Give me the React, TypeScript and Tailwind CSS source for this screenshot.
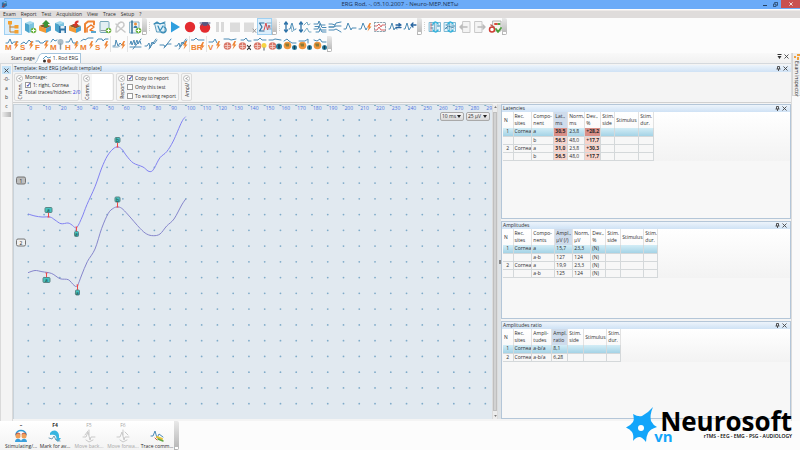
import type { ReactNode } from "react";

const BLUE = "#4a8ab5";
const ORANGE = "#ee8434";
const GREEN = "#6cb33f";
const GRAY = "#c9c9c9";

const Icon = ({ children }: { children: ReactNode }) => (
  <svg viewBox="0 0 14 14" className="size-3.5 shrink-0" fill="none" strokeLinecap="round" strokeLinejoin="round" aria-hidden="true">
    {children}
  </svg>
);

const Plus = () => (
  <>
    <circle cx="10.5" cy="10.5" r="2.8" fill={GREEN} />
    <path d="M10.5 9v3M9 10.5h3" stroke="#fff" strokeWidth="1" />
  </>
);

const Box = ({ top = "#a5daee", left = "#4ba3cb", right = "#7cc4e0" }) => (
  <>
    <path d="M2 3 7 1l4 1.5L6 4.5z" fill={top} />
    <path d="M2 3 6 4.500v8.500l-4-2.500z" fill={left} />
    <path d="M6 4.500l5-2v8.500L6 13z" fill={right} />
  </>
);

const Crate = ({ arrow }: { arrow: ReactNode }) => (
  <>
    <path d="M1 6l5-2 7 2-5 2.500z" fill="#8a5a2c" />
    <path d="M1 6l7 2.500V13l-7-2.500z" fill="#f39a35" />
    <path d="M8 8.500 13 6v4.500L8 13z" fill="#4aa3cf" />
    {arrow}
  </>
);

const Bolt = ({ x = 0, y = 0 }) => <path transform={`translate(${x} ${y})`} d="M11.500 4 9 8.500h1.800L9.500 12.500l4-5h-1.800L13 4z" fill={ORANGE} />;

const Wave = ({ color = BLUE, d = "M1 6h2l2-4 2 5 1.500-2H13" }) => <path d={d} stroke={color} strokeWidth="1" />;

const Letter = ({ children, x = 0 }: { children: string; x?: number }) => (
  <text x={x} y="13" fontSize="8" fontWeight="700" fill={ORANGE} fontFamily="Liberation Sans, sans-serif">
    {children}
  </text>
);

const Brain = () => (
  <>
    <circle cx="4.500" cy="9" r="3.800" fill="#d9786a" />
    <path d="M2 8.500h5M2.500 10.500h4M4.500 6v6" stroke="#f4cfc8" strokeWidth=".8" />
  </>
);

const Head = () => (
  <>
    <circle cx="4.500" cy="8.500" r="3.800" fill="#f0963c" />
    <path d="M2 6.500h4v3H3z" fill="#8a7a38" />
    <circle cx="11.500" cy="10.500" r="2.500" fill="#2d7f9f" />
    <path d="M11.500 9.500v2" stroke="#123b52" strokeWidth="1.500" />
  </>
);

type Tool = { name: string; active?: boolean; icon: ReactNode };

const fileTools: Tool[] = [
  {
    name: "Exam tree",
    active: true,
    icon: (
      <>
        <path d="M4 4v8h5M4 7h5" stroke="#c67a1e" strokeWidth="1" />
        <path d="M2 1h4v3.500H2zM8.500 5h4v3.500h-4zM8.500 10h4v3.500h-4z" fill="#f5a02c" />
      </>
    ),
  },
  { name: "New exam", icon: <><Box /><Plus /></> },
  { name: "Open exam", icon: <Crate arrow={<path d="M6 7V4H4l4-4 4 4h-2v3z" fill="#3d9438" />} /> },
  { name: "Save exam", icon: <><Box /><path d="M6 6h7v7H6z" fill="#2f73a6" /><path d="M7.500 6h4v2.500h-4zM8 10.500h3.500V13H8z" fill="#e4f1f8" /></> },
  { name: "Close exam", icon: <Crate arrow={<path d="M7.500 7.500 4.500 4h2c0-2 1-3.500 4-3.500v2c-1 0-1.500.5-1.500 1.500h1.500z" fill="#d8352a" />} /> },
  {
    name: "Analysis",
    icon: (
      <>
        <path d="M2 12V4l3-2.500h6v3" stroke={ORANGE} strokeWidth="2" />
        <path d="M4 12V8l4-3 3 2-4 3 5 2" stroke="#ee7623" strokeWidth="1.500" />
        <path d="M8 11h5v2H8z" fill="#5aa7cf" />
      </>
    ),
  },
  { name: "Device", icon: <><rect x="2" y="1.500" width="9" height="11" rx="1" fill="#e3eff3" stroke="#78a7b8" /><path d="M3 10.500h5" stroke="#8a9aa0" /><Plus /></> },
  { name: "Patient", icon: <path d="M3 12c0-5 2-9 5-10 3 0 4 3 2 5l-6 5M3 4l4 4 5 4" stroke={GRAY} strokeWidth="1.500" /> },
  {
    name: "Patient report",
    icon: (
      <>
        <path d="M2 2h9v11H2z" fill="#eef6fa" stroke="#6f9fb8" strokeWidth=".8" />
        <path d="M4 1v12" stroke="#2e6c95" strokeWidth="1.500" />
        <circle cx="7.500" cy="4" r="1.500" fill="#ef8f3b" />
        <path d="M5.500 8c0-3 4-3 4 0" fill="#3e7faa" />
        <Plus />
      </>
    ),
  },
];

const acquisitionTools: Tool[] = [
  {
    name: "Monitoring",
    icon: (
      <>
        <path d="M2 3.500h10v8.500H4z" fill="#dff1fa" stroke="#5e9cbd" />
        <path d="M1 4l3-2 3 2 5-2M5 6l2 5 3-5M11 7a3 3 0 1 1-3 5" stroke="#3489b6" strokeWidth="1.200" />
      </>
    ),
  },
  { name: "Start", icon: <path d="M3 1.500 12 7l-9 5.500z" fill="#2f9ede" /> },
  { name: "Record", icon: <circle cx="7" cy="7" r="5.200" fill="#e32b2f" /> },
  { name: "Record trace", icon: <><circle cx="7" cy="7.500" r="5.200" fill="#e32b2f" /><path d="M2 3h10M3 5h1l1-3 1 4 1-4 1 4 1-4 1 3h1" stroke="#4c5a86" strokeWidth="1" /></> },
  { name: "Pause", icon: <path d="M3 2h3v10H3zM8 2h3v10H8z" fill="#dadada" /> },
  { name: "Stop", icon: <path d="M2 2.500h10v9.500H2z" fill="#dcdcdc" /> },
  { name: "Stop and clear", icon: <><path d="M1 2.500h10v9.500H1z" fill="#dcdcdc" /><path d="m10 9 3 3.500m0-3.500-3 3.500" stroke="#999" /></> },
  {
    name: "Averaging",
    active: true,
    icon: (
      <>
        <path d="M6 3H1.500L4 7l-2.500 4H6" stroke="#2c6f9e" strokeWidth="1.200" />
        <path d="m6 10 2-7 1.500 7L11 5l1 3" stroke="#d9484a" strokeWidth="1" />
        <path d="M9 3h4M10 6h3M10 9h3" stroke="#6f9fb8" strokeWidth=".8" />
      </>
    ),
  },
];

const updown = "M3 2v10M1.500 4 3 2l1.500 2M1.500 10 3 12l1.500-2";

const traceTools: Tool[] = [
  { name: "Scale traces", icon: <><path d={updown} stroke="#2f73a8" strokeWidth="1.300" /><Wave d="M6 9h1l2-6 2 7 2-1" /><Wave d="M8 5l1 7 3-3" color="#8fb9cf" /></> },
  { name: "Shift traces", icon: <><path d={updown} stroke="#2f73a8" strokeWidth="1.300" /><Wave d="M6 5l3-3 1 3 2-1M6 12l3-4 2 4h2" color="#78abc4" /></> },
  { name: "Superimpose", icon: <Wave d="M1 4h4l1-3 2 4h4M2 6.500h4l1-3 2 4h4M1 9h4l1-3 2 4h5M3 12h3l1-3 2 3h4" /> },
  { name: "Spread", icon: <Wave d="M1 7h5l2-4 5-1M1 7h5l2-1h5M1 10h5l2-1 5 3M1 4h3l3 1" /> },
  { name: "Single trace", icon: <Wave d="M1 9h2l2-6 3 7 1-2h4" /> },
  { name: "Stimulated trace", icon: <><Wave d="M1 9h2l2-6 3 7 1-2" /><Bolt y={-1} /></> },
  { name: "Select traces", icon: <><rect x="1.500" y="2.500" width="11" height="9" stroke="#8aa1ad" strokeDasharray="1.500 1.500" /><Wave color="#d9686a" d="M2 6h2l2-2 2 3 1-2h3M2 10h2l2-3 2 3h4" /></> },
  { name: "Add trace", icon: <><Wave d="M1 9h1l2-6 2 7 1-2 2 1" /><path d="M8 5h5M8 7.500h5M11 3.500 13 5l-2 1" stroke="#2664a0" strokeWidth="1.300" /></> },
  { name: "Move trace", icon: <><Wave d="M1 9h1l2-6 2 7 2-3" /><path d="M13 5H8l2-2M8 5l2 2" stroke="#2664a0" strokeWidth="1.300" /></> },
];

const Frames = () => (
  <>
    <path d="M1.500 2.500h5v9h-5zM8.500 2.500h4v9h-4z" fill="#e5f4fb" stroke="#6fb0cf" strokeWidth=".9" />
    <path d="M3 5h2M3 8h2M9.500 6h2" stroke="#2c7ba5" />
    <path d="M5 4c2-3 4-2 5 0M10 10c-2 3-4 2-5 0" stroke="#33b3dc" strokeWidth="1.500" />
  </>
);

const reportTools: Tool[] = [
  { name: "Synchronize all", icon: <><Frames /><path d="M3 3v8" stroke="#cf6a6a" strokeWidth=".8" /></> },
  { name: "Synchronize page", icon: <><Frames /><path d="M2 9l3-3 6 2" stroke="#397ca3" strokeWidth=".8" /></> },
  { name: "Previous page", icon: <><path d="M5 1.500h7v11H5z" fill="#f4f4f4" stroke={GRAY} /><path d="M9 7H2l2-2M2 7l2 2" stroke="#bbb" strokeWidth="1.500" /></> },
  { name: "Next page", icon: <><path d="M2 1.500h7v11H2z" fill="#f4f4f4" stroke={GRAY} /><path d="M5 7h7l-2-2M12 7l-2 2" stroke="#bbb" strokeWidth="1.500" /></> },
  {
    name: "Finish exam",
    icon: (
      <>
        <path d="M5 1h8v10H5z" fill="#f6f6f0" stroke="#a3a3a3" strokeWidth=".8" />
        <path d="M7 4h2" stroke="#d94b3d" strokeWidth="2" />
        <path d="M10.500 4h1" stroke="#4b9e3d" strokeWidth="2" />
        <circle cx="4" cy="9.500" r="2.500" fill="#fff" stroke="#cf3d33" strokeWidth="1.500" />
        <path d="M8 9l2 3 3-4" stroke="#4b9e3d" strokeWidth="1.800" />
        <path d="M3 5l3 2" stroke="#c0584e" strokeWidth="1.500" />
      </>
    ),
  },
];

const lettered = (name: string, letter: string, d?: string): Tool => ({
  name,
  icon: <><Wave d={d} /><Letter>{letter}</Letter><Bolt /></>,
});

const testTools: Tool[][] = [
  [
    lettered("Motor conduction", "M"),
    lettered("Sensory conduction", "S", "M1 7l3-2 2 2 3-4 2 2h2"),
    lettered("F-wave", "F", "M1 4h3l1 2h3l2-2h3"),
    { name: "Magnetic stimulation", icon: <><Wave d="M1 5l2-3 2 2 2-1" /><Letter>M</Letter><circle cx="10.500" cy="5" r="3" fill="#a9bcc7" /><path d="M10.500 7v5" stroke="#8799a5" strokeWidth="1.500" /></> },
    lettered("H-reflex", "H", "M1 5h3l2-4 2 5h5"),
    lettered("Repetitive motor", "M", "M1 4l3-2 1 1 3-2h5"),
    lettered("Repetitive sensory", "S", "M1 5l2-3h4l1 2 2-2h3"),
  ],
  [{ name: "Blink reflex", icon: <><Wave d="M1 9h2l1-6 2 6 2-3 2 2" /><Wave d="M1 10h5l2-1" color="#88adc4" /><Bolt /></> }],
  [
    { name: "Interference EMG", icon: <Wave d="M1 7l1-3 1 4 2-5 1 5 2-5 1 4 2-3 1 3M1 10h11M4 12l8-10" /> },
    { name: "Needle EMG", icon: <Wave d="M1 9h2l2-3 1 5 2-6 2 2 3-4M5 12l7-10" /> },
    { name: "Single fiber", icon: <Wave d="M1 8h4l1 2 2-3h4M5 11l7-9" /> },
    { name: "Macro EMG", icon: <><Wave d="M1 9h2l2-3 1 4 2-5 2 2 3-4M5 12l7-10" /><Bolt /></> },
  ],
  [{ name: "Brainstem", icon: <><Wave d="M0 3h3l2-2 2 2h6" /><Letter>BR</Letter><Bolt y={1} /></> }],
  [
    { name: "Vestibular EP", icon: <><Wave d="M1 5h4l2-3 2 4" /><Letter>V</Letter><Bolt x={-1} /></> },
    { name: "Somatosensory EP", icon: <><Brain /><Wave d="M1 2h5l2 1 5-1" /><Bolt /></> },
    { name: "Event related EP", icon: <><Brain /><Wave d="M3 3h3l2-2 2 3h3" /><path d="m9.500 8.500 3 4m0-4-3 4" stroke="#35383a" strokeWidth="1.200" /></> },
    { name: "Flash EP", icon: <><Brain /><Wave d="M1 3h4l2-2 2 2h4" /><circle cx="11" cy="8.500" r="2.500" fill="#f7d443" /><path d="M11 11v2" stroke="#8a8f96" strokeWidth="1.500" /></> },
    { name: "Auditory EP", icon: <><Brain /><Wave d="M1 3h4l2-1 6 1" /><circle cx="11" cy="9.500" r="3" fill="#2b7f9f" /><path d="M11 8v3" stroke="#16394d" strokeWidth="1.500" /></> },
    { name: "Pattern VEP", icon: <><Head /><Wave d="M1 4l3-2 2 2 3 2h4" /></> },
    { name: "ERG", icon: <><Head /><Wave d="M1 4h6l3-2v4" /></> },
    { name: "EOG", icon: <><Head /><Wave d="M1 3l3 1 3-2 2 3h4" /></> },
  ],
];

const Grip = () => (
  <span className="flex w-[5px] justify-center py-1">
    <span className="border-l border-dotted border-stone-300" />
  </span>
);

const Overflow = () => (
  <button aria-label="Toolbar options" className="flex w-[5px] items-end justify-center rounded-r-xs bg-linear-to-b from-[#e9e9e9] to-[#b4b4b4]">
    <span className="mb-px h-[2px] w-[3px] bg-white" />
  </button>
);

const ToolButton = ({ tool, wide }: { tool: Tool; wide?: boolean }) => (
  <button
    aria-label={tool.name}
    className={`flex items-center justify-center ${wide ? "w-[18px]" : "w-[15px]"} ${tool.active ? "border border-[#9fd0f2] bg-[#dceefb]" : ""}`}
  >
    <Icon>{tool.icon}</Icon>
  </button>
);

const ToolGroup = ({ tools, first }: { tools: Tool[]; first?: boolean }) => (
  <div className="flex h-[17px]">
    {first ? <span className="w-1" /> : <Grip />}
    {tools.map((tool, i) => (
      <ToolButton key={tool.name} tool={tool} wide={first && i === 0} />
    ))}
    <Overflow />
  </div>
);

const CloseIcon = () => (
  <svg viewBox="0 0 5 5" className="size-[5px]" stroke="#444" strokeWidth=".9" aria-hidden="true">
    <path d="M.5.5l4 4m0-4-4 4" />
  </svg>
);

const PinIcon = () => (
  <svg viewBox="0 0 5 5" className="size-[5px]" fill="none" stroke="#444" aria-hidden="true">
    <path d="M1.500 3V.5h2V3M.5 3h4M2.500 3v2" strokeWidth=".9" />
  </svg>
);

const PanelTitle = ({ children }: { children: ReactNode }) => (
  <div className="flex h-[7px] shrink-0 items-center justify-between bg-linear-to-b from-[#edf4fb] to-[#cfe2f5] pr-[3px] pl-px leading-[7px]">
    <h2>{children}</h2>
    <div className="flex gap-[2px]">
      <button aria-label="Pin"><PinIcon /></button>
      <button aria-label="Close"><CloseIcon /></button>
    </div>
  </div>
);

const Foldable = ({ label, children }: { label: string; children?: ReactNode }) => (
  <section className="flex gap-[2px] rounded-xs border border-[#dcdcdc] bg-[#f6f6f6] px-px">
    <div className="flex w-[7px] flex-col items-center gap-px">
      <button aria-label={`Collapse ${label}`} className="mt-px flex size-[7px] shrink-0 items-center justify-center rounded-full border border-[#bbb] bg-white">
        <svg viewBox="0 0 4 4" className="size-[3px]" fill="none" stroke="#333"><path d="M3 .5 1.500 2 3 3.500" /></svg>
      </button>
      <span className="rotate-180 leading-[6px] [writing-mode:vertical-rl]">{label}</span>
    </div>
    {children}
  </section>
);

const Check = ({ label, checked }: { label: string; checked?: boolean }) => (
  <label className="flex h-2 items-center gap-[2px]">
    <input
      type="checkbox"
      defaultChecked={checked}
      className="flex size-[6px] shrink-0 appearance-none items-center justify-center border border-[#9a9a9a] bg-white text-[#3542a8] checked:after:text-[6px] checked:after:leading-[4px] checked:after:font-bold checked:after:content-['✓']"
    />
    {label}
  </label>
);

type Point = [number, number];

const PITCH = 15.76;

const traceOne: Point[] = [
  [28, 214], [35, 216], [42, 217], [50, 217], [55, 220], [61, 223.7], [68, 223], [72, 225], [76.5, 227.7], [81.7, 218],
  [87, 204.500], [95, 186.7], [101.7, 168], [107.3, 156], [113, 149], [117.3, 147], [121.7, 149], [126.7, 156], [133.3, 163],
  [143, 167], [148, 171], [151.7, 171.3], [154.500, 167.7], [160, 157.7], [166.7, 151.7], [173.3, 141], [181.7, 122], [185.7, 116.7],
];

const traceTwo: Point[] = [
  [28, 272.7], [35, 270.500], [42, 271.7], [51.7, 273.500], [60, 278.7], [68.3, 279.7], [74, 285.3], [77.3, 285.7], [81.7, 275],
  [87.3, 261.7], [95, 249], [101.7, 228.3], [108.3, 213.3], [113.3, 208.3], [117.3, 207], [121.7, 208.3], [128.3, 215],
  [140, 228.3], [146.7, 234], [153.3, 235.7], [160, 234], [166.7, 226], [174, 219], [181.7, 205], [185.7, 199],
];

// Catmull-Rom through the samples, written as cubic segments
const smooth = (pts: Point[]) =>
  pts.slice(1).reduce((d, p, i) => {
    const a = pts[Math.max(i - 1, 0)];
    const b = pts[i];
    const c = pts[Math.min(i + 2, pts.length - 1)];
    return `${d}C${b[0] + (p[0] - a[0]) / 6} ${b[1] + (p[1] - a[1]) / 6} ${p[0] - (c[0] - b[0]) / 6} ${p[1] - (c[1] - b[1]) / 6} ${p[0]} ${p[1]}`;
  }, `M${pts[0][0]} ${pts[0][1]}`);

const markers = [
  { label: "b", x: 117.5, y: 140, w: 5, tip: 147 },
  { label: "b", x: 117.5, y: 199.5, w: 5, tip: 207 },
  { label: "a", x: 48.5, y: 210, w: 7, tip: 217 },
  { label: "a", x: 76.5, y: 234, w: 4, tip: 227 },
  { label: "a", x: 46.5, y: 280, w: 7, tip: 273 },
  { label: "a", x: 77.5, y: 292.5, w: 4, tip: 285 },
];

const Plot = () => (
  <svg viewBox="14 105 479 314" className="block h-[314px] w-[479px]" fontFamily="Open Sans, sans-serif" role="img" aria-label="ERG traces">
    {Array.from({ length: 30 }, (_, col) => {
      const x = 28.3 + col * PITCH;
      return (
        <g key={col}>
          <path d={`M${x - 1} 105.5h2`} stroke="#7fb0c4" />
          <text x={x + 1} y="110" fontSize="5" fill="#4a74e0">{col * 10}</text>
          {Array.from({ length: 19 }, (_, row) => (
            <circle key={row} cx={x} cy={120 + row * PITCH} r=".9" fill="#7fabc9" />
          ))}
        </g>
      );
    })}
    <path d={smooth(traceOne)} fill="none" stroke="#8282f2" />
    <path d={smooth(traceTwo)} fill="none" stroke="#8686cc" />
    {markers.map((m) => (
      <g key={`${m.x}-${m.y}`}>
        <path d={`M${m.x} ${m.y}V${m.tip}M${m.x - 1} ${m.tip}h2`} stroke="#f04848" />
        <rect x={m.x - m.w / 2} y={m.y - 2.5} width={m.w} height="5" rx="1" fill="#45c4c0" stroke="#5c8787" />
        <text x={m.x} y={m.y + 2} fontSize="5" textAnchor="middle" fill="#14393a">{m.label}</text>
      </g>
    ))}
    {["1", "2"].map((n, i) => (
      <g key={n}>
        <rect x="16.500" y={177 + i * 62} width="9" height="7" rx="1.500" fill={i ? "#f0f0f0" : "#bdbdbd"} stroke="#747474" />
        <text x="21" y={182.5 + i * 62} fontSize="5" textAnchor="middle" fill="#222">{n}</text>
      </g>
    ))}
  </svg>
);

const ScaleSelect = ({ label, value }: { label: string; value: string }) => (
  <div className="relative h-[9px] w-6">
    <select
      aria-label={label}
      defaultValue={value}
      className="block h-full w-full appearance-none rounded-xs border border-[#a9a9a9] bg-linear-to-b from-[#f4f4f4] to-[#d8d8d8] pl-px leading-[7px]"
    >
      <option>{value}</option>
    </select>
    <svg viewBox="0 0 4 3" className="pointer-events-none absolute top-[3px] right-[3px] h-[3px] w-1"><path d="M0 0h4L2 3z" fill="#222" /></svg>
  </div>
);

type Grid = {
  title: string;
  // column header, width class
  cols: [string, string][];
  rows: string[][];
  sorted: number;
  flagged?: boolean;
};

const grids: Grid[] = [
  {
    title: "Latencies",
    cols: [
      ["N", "w-[10px]"], ["Rec. sites", "w-[18px]"], ["Compo- nent", "w-[22px]"], ["Lat., ms", "w-[14px]"], ["Norm, ms", "w-[17px]"],
      ["Dev., %", "w-[16px]"], ["Stim. side", "w-[14px]"], ["Stimulus", "w-[24px]"], ["Stim. dur.", "w-[15px]"],
    ],
    rows: [
      ["1", "Cornea", "a", "30,5", "23,8", "+28,2", "", "", ""],
      ["", "", "b", "56,5", "48,0", "+17,7", "", "", ""],
      ["2", "Cornea", "a", "31,0", "23,8", "+30,3", "", "", ""],
      ["", "", "b", "56,5", "48,0", "+17,7", "", "", ""],
    ],
    sorted: 3,
    flagged: true,
  },
  {
    title: "Amplitudes",
    cols: [
      ["N", "w-[10px]"], ["Rec. sites", "w-[17px]"], ["Compo- nents", "w-[23px]"], ["Ampl., µV (/)", "w-[18px]"], ["Norm, µV", "w-[18px]"],
      ["Dev., %", "w-[15px]"], ["Stim. side", "w-[15px]"], ["Stimulus", "w-[23px]"], ["Stim. dur.", "w-[14px]"],
    ],
    rows: [
      ["1", "Cornea", "a", "15,7", "23,3", "(N)", "", "", ""],
      ["", "", "a-b", "127", "124", "(N)", "", "", ""],
      ["2", "Cornea", "a", "19,9", "23,3", "(N)", "", "", ""],
      ["", "", "a-b", "125", "124", "(N)", "", "", ""],
    ],
    sorted: 3,
  },
  {
    title: "Amplitudes ratio",
    cols: [
      ["N", "w-[10px]"], ["Rec. sites", "w-[17px]"], ["Ampli- tudes", "w-[20px]"], ["Ampl. ratio", "w-[16px]"],
      ["Stim. side", "w-[16px]"], ["Stimulus", "w-[23px]"], ["Stim. dur.", "w-[14px]"],
    ],
    rows: [
      ["1", "Cornea", "a-b/a", "8,1", "", "", ""],
      ["2", "Cornea", "a-b/a", "6,28", "", "", ""],
    ],
    sorted: 3,
  },
];

const cellTone = (grid: Grid, row: number, col: number) => {
  if (!grid.flagged || (col !== 3 && col !== 5)) return "";
  return row === 0 ? "bg-[#d98f87] font-bold" : "bg-[#f8d3ca] font-bold";
};

const GridPanel = ({ grid, size }: { grid: Grid; size: string }) => (
  <section className={`flex flex-col border border-[#b4c6d8] bg-[#f7f7f7] ${size}`}>
    <PanelTitle>{grid.title}</PanelTitle>
    <div className="bg-linear-to-b from-white to-[#f3f3f3] pl-px">
      <table className="w-max table-fixed border-collapse">
        <thead>
          <tr className="h-4">
            {grid.cols.map(([head, width], c) => (
              <th key={c} className={`${width} overflow-hidden border-r border-[#e2e2e2] p-0 text-left font-normal ${c === grid.sorted ? "bg-[#cfdcec]" : ""} ${c === 0 ? "text-center" : ""}`}>
                <div className="pl-px leading-[7px]">
                  {head.includes(" ") ? (
                    <>
                      {head.slice(0, head.indexOf(" "))}
                      <br />
                      <span className="whitespace-nowrap">{head.slice(head.indexOf(" ") + 1)}</span>
                    </>
                  ) : (
                    head
                  )}
                </div>
              </th>
            ))}
          </tr>
        </thead>
        <tbody>
          {grid.rows.map((row, r) => (
            <tr key={r} className={r === 0 ? "h-2 bg-linear-to-b from-[#d3edf6] to-[#a4d3e6]" : "h-2 bg-[#f7f7f7]"}>
              {row.map((cell, c) => (
                <td key={c} className={`overflow-hidden border-r border-b border-[#d4d8da] p-0 leading-[7px] whitespace-nowrap ${cellTone(grid, r, c)}`}>
                  <div className={c === 0 ? "h-[7px] text-center" : "h-[7px] pl-px"}>{cell}</div>
                </td>
              ))}
            </tr>
          ))}
        </tbody>
      </table>
    </div>
  </section>
);

const commands = [
  {
    key: "–",
    label: "Stimulating/...",
    icon: (
      <>
        <path d="M2 6c0-6 10-6 10 0" stroke="#2e9bd6" strokeWidth="1.500" />
        <circle cx="4" cy="7" r="2.500" fill="#f0a05a" />
        <circle cx="10" cy="7" r="2.500" fill="#f0a05a" />
        <path d="M1 13c0-4 5-4 6-1 1-3 6-3 6 1z" fill="#3aa0dc" />
        <path d="M2 5l2-1 2 1M8 5l2-1 2 1" stroke="#c14b30" />
      </>
    ),
  },
  { key: "F4", label: "Mark for av...", icon: <><path d="M2 4c3-4 8-3 9 2v3h2l-3 4-3-3h1.500c0-4-2-5-6.500-4z" fill="#38b5e0" /><Wave d="M1 9l3 1 2-3 2 4 4 1" color="#6f9db5" /></> },
  { key: "F5", label: "Move back...", off: true, icon: <path d="M1 8h3l2-5 2 8 1-3h4M7 1v5M3 6l3-4M4 11l3 2 4-2" stroke={GRAY} /> },
  { key: "F6", label: "Move forwa...", off: true, icon: <path d="M1 8h3l2-5 2 8 1-3h4M7 1v5M9 3l3 3M4 11l3 2 4-2" stroke={GRAY} /> },
  { key: "", label: "Trace comm...", icon: <><Wave d="M1 7h2l2-5 2 7 2-4 4 3" /><path d="m7 8 5 2" stroke="#e7c33b" strokeWidth="2" /><path d="m8 10 5 2" stroke="#62a644" strokeWidth="1.500" /><path d="m5 9 2 2" stroke="#d65f3a" /></> },
];

export default function App() {
  return (
    <div className="relative flex min-h-screen flex-col overflow-hidden border-b border-[#a9bfd3] bg-[#fcfcfc] font-['Open_Sans','Noto_Sans',sans-serif] text-[5px] leading-[7px] text-[#2c2c2c]">
      <header className="grid h-[9px] shrink-0 grid-cols-[1fr_auto_1fr] bg-[#6babf8]">
        <svg viewBox="0 0 8 8" className="mt-px ml-px size-[7px]">
          <path d="M1 2l5-2 1 5-4 3-2-2z" fill="#2670a5" />
          <path d="M2 5l3-2M1 7l3-1" stroke="#b33a3a" />
          <path d="M3 2h3" stroke="#9adcf5" />
        </svg>
        <h1 className="text-[6px] leading-[9px] text-[#1d3350]">ERG Rod, -, 05.10.2007 - Neuro-MEP.NETω</h1>
        <div className="flex items-stretch justify-end">
          <button aria-label="Minimize" className="flex w-[11px] items-center justify-center"><span className="mt-px h-px w-1 bg-[#24405f]" /></button>
          <button aria-label="Restore" className="flex w-[11px] items-center justify-center">
            <svg viewBox="0 0 6 6" className="size-[5px]" fill="none" stroke="#24405f"><path d="M.5 2.500h3v3h-3zM2 2V.5h3.500V4H4" /></svg>
          </button>
          <button aria-label="Close window" className="mb-px flex w-[19px] items-center justify-center bg-[#c9504f]">
            <svg viewBox="0 0 5 5" className="size-1" stroke="#fff"><path d="M.5.5l4 4m0-4-4 4" /></svg>
          </button>
        </div>
      </header>

      <nav className="mt-px flex h-2 shrink-0 items-center gap-[5px] border-t border-[#eeeae8] bg-[#dfdcdb] pl-[3px]">
        {["Exam", "Report", "Test", "Acquisition", "View", "Trace", "Setup", "?"].map((item) => (
          <button key={item}>{item}</button>
        ))}
      </nav>

      <div className="flex h-[35px] shrink-0 flex-col gap-px">
        <div className="flex">
          <ToolGroup tools={fileTools} first />
          <ToolGroup tools={acquisitionTools} />
          <ToolGroup tools={traceTools} />
          <ToolGroup tools={reportTools} />
        </div>
        <div className="flex h-4">
          <span className="w-1" />
          {testTools.map((tools, i) => (
            <div key={i} className={`flex ${i ? "ml-px border-l border-[#e3e3e3]" : ""}`}>
              {tools.map((tool) => (
                <ToolButton key={tool.name} tool={tool} />
              ))}
            </div>
          ))}
          <Overflow />
        </div>
      </div>

      <div className="flex grow">
        <div className="flex min-w-0 grow flex-col border-r border-[#dcdcdc] bg-[#f4f4f4]">
          <div className="flex h-[11px] shrink-0 items-end border-b border-[#d5d9dd] bg-linear-to-b from-[#f9f9f9] to-[#f1f1f1] pr-[2px]">
            <button className="h-[9px] pl-[11px]">Start page</button>
            <button className="flex h-[10px] items-center">
              <svg viewBox="0 0 7 10" className="h-[10px] w-[7px]"><path d="M0 10 6 0h1v10z" fill="#fff" /><path d="M0 10C3 9 3 1 7 .5" fill="none" stroke="#a5c4dc" /></svg>
              <span className="flex h-full items-center gap-px border-t border-r border-[#a5c4dc] bg-white pr-[2px]">
                <svg viewBox="0 0 10 8" className="h-2 w-[10px]" fill="none">
                  <path d="M1 4l3-3 2 2 3-1" stroke="#5b9cc4" />
                  <circle cx="2.500" cy="6" r="1.500" fill="#35302c" />
                  <circle cx="7" cy="6" r="2" fill="#b5603c" />
                </svg>
                1. Rod ERG
              </span>
            </button>
            <div className="mb-1 ml-auto flex gap-[2px]">
              <button aria-label="Tab list"><svg viewBox="0 0 5 5" className="size-[5px]"><path d="M.5 0h4v1h-4zM.5 2h4l-2 3z" fill="#333" /></svg></button>
              <button aria-label="Close tab"><CloseIcon /></button>
            </div>
          </div>

          <div className="flex grow">
            <aside className="flex w-[13px] shrink-0 flex-col items-center gap-[2px] border-x border-[#dadada] pt-[2px]">
              <button className="flex h-2 w-[9px] items-center justify-center bg-[#c5e3f8]" aria-label="Close marker"><CloseIcon /></button>
              {["-0-", "a", "b", "c"].map((mark) => (
                <button key={mark} className="h-[7px]">{mark}</button>
              ))}
              <span className="h-[5px] w-[9px] bg-linear-to-r from-[#ececec] to-[#b4b4b4]" />
            </aside>

            <div className="flex min-w-0 grow flex-col pt-px">
              <section className="shrink-0 border-b border-[#d0d0d0] pb-px">
                <PanelTitle>Template: Rod ERG [default template]</PanelTitle>
                <div className="flex h-[29px] gap-[2px] pt-px pl-px">
                  <Foldable label="Chann.">
                    <div className="flex w-[52px] flex-col whitespace-nowrap">
                      <span>Montage:</span>
                      <Check label="1: right, Cornea" checked />
                      <span>Total traces/hidden: <b className="font-normal text-[#2a35d8]">2/0</b></span>
                    </div>
                  </Foldable>
                  <Foldable label="Comm.">
                    <textarea aria-label="Comment" className="w-5 resize-none bg-white" />
                  </Foldable>
                  <Foldable label="Report">
                    <div className="flex w-[50px] flex-col justify-between whitespace-nowrap">
                      <Check label="Copy to report" checked />
                      <Check label="Only this test" />
                      <Check label="To existing report" />
                    </div>
                  </Foldable>
                  <Foldable label="Ampl/" />
                </div>
              </section>

              <div className="flex grow pt-px pb-[2px]">
                <div className="relative min-w-0 flex-1 overflow-hidden border-t border-l border-[#c8d2da] bg-[#e1e9f0]">
                  <Plot />
                  <div className="absolute top-[7px] right-[2px] flex gap-[2px]">
                    <ScaleSelect label="Sweep" value="10 ms" />
                    <ScaleSelect label="Sensitivity" value="25 µV" />
                  </div>
                </div>
                <div className="flex w-[6px] shrink-0 flex-col items-center justify-between border-x border-[#dcdcdc] bg-[#ececec] py-[2px]">
                  <svg viewBox="0 0 4 3" className="h-[2px] w-[3px]"><path d="M0 3h4L2 0z" fill="#777" /></svg>
                  <span className="my-1 w-1 grow border border-[#bfbfbf] bg-[#d2d2d2]" />
                  <svg viewBox="0 0 4 3" className="h-[2px] w-[3px]"><path d="M0 0h4L2 3z" fill="#777" /></svg>
                </div>
                <div className="flex w-[3px] shrink-0 items-center justify-center bg-[#dfe3e6]">
                  <span className="h-1 w-[2px] bg-[#888]" />
                </div>
                <div className="flex w-[290px] shrink-0 flex-col gap-[2px]">
                  <GridPanel grid={grids[0]} size="h-[115px]" />
                  <GridPanel grid={grids[1]} size="h-[98px]" />
                  <GridPanel grid={grids[2]} size="grow" />
                </div>
              </div>
            </div>
          </div>
        </div>

        <aside className="w-2 shrink-0 bg-[#fafafa]">
          <button className="flex h-[43px] w-full flex-col items-center gap-px border-b border-l border-[#d5d5d5] bg-[#efefef] pt-px">
            <svg viewBox="0 0 6 6" className="size-[6px] shrink-0"><path d="M0 2h2v2H0zM3 0h3v2H3zM3 3h2v3H3z" fill="#f0a03c" /></svg>
            <span className="leading-[6px] whitespace-nowrap [writing-mode:vertical-rl]">Exam inspector</span>
          </button>
        </aside>
      </div>

      <footer className="flex h-[29px] shrink-0">
        <div className="flex bg-linear-to-b from-white to-[#f3f3f3] pl-1">
          {commands.map((cmd) => (
            <button key={cmd.label} className={`flex w-[34px] flex-col items-center justify-end ${cmd.off ? "text-[#a8a8a8]" : ""}`}>
              <span className={`h-[7px] ${cmd.off ? "" : "font-bold"}`}>{cmd.key}</span>
              <Icon>{cmd.icon}</Icon>
              <span className="h-[7px] whitespace-nowrap">{cmd.label}</span>
            </button>
          ))}
        </div>
        <Overflow />
      </footer>

      <div className="absolute right-2 bottom-[7px] flex items-start">
        <svg viewBox="0 0 32 36" className="-mr-[3px] h-9 w-8 shrink-0">
          <path
            fill="#12a5fa"
            d="M28 0Q24.500 8 26 14Q28 18 32 20Q25 22 23 26Q21 30 21 35Q17 30 14.500 30Q11 30 8 34Q9 28 7 25Q5 22 1 20.500Q6 18 8 15Q9.500 12 8 7Q13 10 17 9Q23 6 28 0z"
          />
          <circle cx="16" cy="21" r="3" fill="#fff" />
        </svg>
        <div className="mt-[3px] flex flex-col">
          <p className="pl-[6px] text-[26px] leading-[22px] font-bold text-black">Neurosoft</p>
          <div className="flex items-center justify-between">
            <p className="text-[15px] leading-[8px] font-bold text-[#12a5fa]">vn</p>
            <p className="text-[5px] leading-[8px] font-semibold whitespace-nowrap text-black">rTMS - EEG - EMG - PSG - AUDIOLOGY</p>
          </div>
        </div>
      </div>
    </div>
  );
}
